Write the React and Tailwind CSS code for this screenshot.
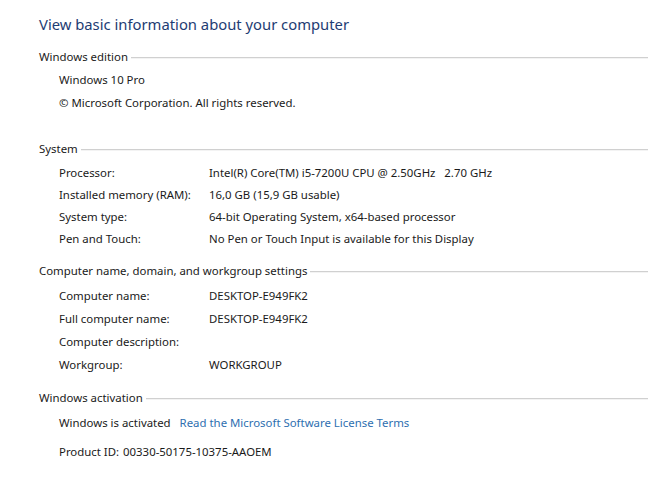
export default function App() {
  const font = { fontFamily: '"Noto Sans", "Open Sans", sans-serif' };
  const Heading = ({ children, className = "" }) => (
    <div className={`flex h-[22px] items-center ${className}`}>
      <span className="whitespace-nowrap text-[11.4px] text-[#1a1a1a]">{children}</span>
      <div className="ml-[3px] flex-1 border-t border-[#d0d0d0] border-b-[#f3f3f3] border-b h-[2px] mt-[1px]"></div>
    </div>
  );
  const Row = ({ label, value, h = "h-[22px]" }) => (
    <div className={`flex ${h} items-center pl-[20px] text-[11.4px] text-[#1a1a1a]`}>
      <div className="w-[150px] shrink-0 whitespace-nowrap">{label}</div>
      <div className="whitespace-pre">{value}</div>
    </div>
  );
  return (
    <div className="w-[648px] h-[500px] bg-white overflow-hidden pl-[39px] pt-[13px]" style={font}>
      <div className="h-[22px] flex items-center text-[14.8px] text-[#1e3c73] whitespace-nowrap">
        View basic information about your computer
      </div>

      <Heading className="mt-[11px]">Windows edition</Heading>
      <div className="pl-[20px] text-[11.4px] text-[#1a1a1a]">
        <div className="h-[23px] flex items-center">Windows 10 Pro</div>
        <div className="h-[23px] flex items-center">© Microsoft Corporation. All rights reserved.</div>
      </div>

      <Heading className="mt-[24px]">System</Heading>
      <div className="mt-[2px]">
        <Row label="Processor:" value="Intel(R) Core(TM) i5-7200U CPU @ 2.50GHz   2.70 GHz" />
        <Row label="Installed memory (RAM):" value="16,0 GB (15,9 GB usable)" />
        <Row label="System type:" value="64-bit Operating System, x64-based processor" />
        <Row label="Pen and Touch:" value="No Pen or Touch Input is available for this Display" />
      </div>

      <Heading className="mt-[10px]">Computer name, domain, and workgroup settings</Heading>
      <div className="mt-[2px]">
        <Row h="h-[23px]" label="Computer name:" value="DESKTOP-E949FK2" />
        <Row h="h-[23px]" label="Full computer name:" value="DESKTOP-E949FK2" />
        <Row h="h-[23px]" label="Computer description:" value="" />
        <Row h="h-[23px]" label="Workgroup:" value="WORKGROUP" />
      </div>

      <Heading className="mt-[11px]">Windows activation</Heading>
      <div className="pl-[20px] text-[11.4px] text-[#1a1a1a]">
        <div className="mt-[3px] h-[22px] flex items-center whitespace-nowrap">
          <span>Windows is activated</span>
          <span className="ml-[9px] text-[#2e6fb0]">Read the Microsoft Software License Terms</span>
        </div>
        <div className="mt-[7px] h-[22px] flex items-center whitespace-nowrap">
          <span>Product ID:</span>
          <span className="ml-[4px]">00330-50175-10375-AAOEM</span>
        </div>
      </div>
    </div>
  );
}
